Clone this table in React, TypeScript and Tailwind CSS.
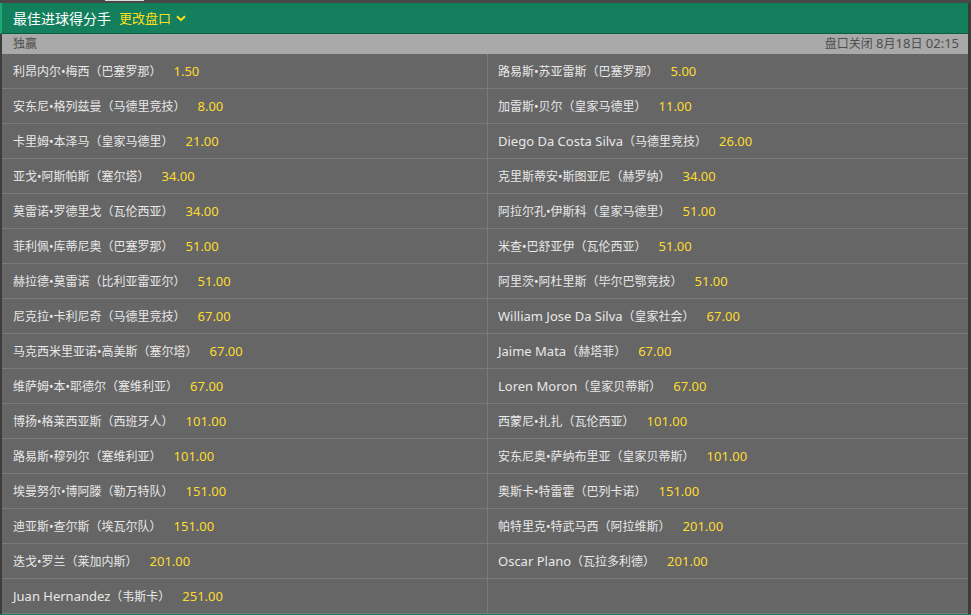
import React from "react";

const left: [string, string][] = [
  ["利昂内尔•梅西（巴塞罗那）", "1.50"],
  ["安东尼•格列兹曼（马德里竞技）", "8.00"],
  ["卡里姆•本泽马（皇家马德里）", "21.00"],
  ["亚戈•阿斯帕斯（塞尔塔）", "34.00"],
  ["莫雷诺•罗德里戈（瓦伦西亚）", "34.00"],
  ["菲利佩•库蒂尼奥（巴塞罗那）", "51.00"],
  ["赫拉德•莫雷诺（比利亚雷亚尔）", "51.00"],
  ["尼克拉•卡利尼奇（马德里竞技）", "67.00"],
  ["马克西米里亚诺•高美斯（塞尔塔）", "67.00"],
  ["维萨姆•本•耶德尔（塞维利亚）", "67.00"],
  ["博扬•格莱西亚斯（西班牙人）", "101.00"],
  ["路易斯•穆列尔（塞维利亚）", "101.00"],
  ["埃曼努尔•博阿滕（勒万特队）", "151.00"],
  ["迪亚斯•查尔斯（埃瓦尔队）", "151.00"],
  ["迭戈•罗兰（莱加内斯）", "201.00"],
  ["Juan Hernandez（韦斯卡）", "251.00"],
];

const right: [string, string][] = [
  ["路易斯•苏亚雷斯（巴塞罗那）", "5.00"],
  ["加雷斯•贝尔（皇家马德里）", "11.00"],
  ["Diego Da Costa Silva（马德里竞技）", "26.00"],
  ["克里斯蒂安•斯图亚尼（赫罗纳）", "34.00"],
  ["阿拉尔孔•伊斯科（皇家马德里）", "51.00"],
  ["米查•巴舒亚伊（瓦伦西亚）", "51.00"],
  ["阿里茨•阿杜里斯（毕尔巴鄂竞技）", "51.00"],
  ["William Jose Da Silva（皇家社会）", "67.00"],
  ["Jaime Mata（赫塔菲）", "67.00"],
  ["Loren Moron（皇家贝蒂斯）", "67.00"],
  ["西蒙尼•扎扎（瓦伦西亚）", "101.00"],
  ["安东尼奥•萨纳布里亚（皇家贝蒂斯）", "101.00"],
  ["奥斯卡•特雷霍（巴列卡诺）", "151.00"],
  ["帕特里克•特武马西（阿拉维斯）", "201.00"],
  ["Oscar Plano（瓦拉多利德）", "201.00"],
  ["", ""],
];

const font = {
  fontFamily: '"Noto Sans", "Noto Sans CJK SC", sans-serif',
};

function Mixed({ text }: { text: string }) {
  const parts = text.split(/([A-Za-z0-9:. ]+)/).filter((p) => p.length > 0);
  return (
    <>
      {parts.map((p, i) =>
        /^[A-Za-z0-9:. ]+$/.test(p) ? (
          <span key={i} className="text-[13px]">
            {p}
          </span>
        ) : (
          <span key={i}>{p}</span>
        )
      )}
    </>
  );
}

function Cell({ name, odds, isLeft }: { name: string; odds: string; isLeft: boolean }) {
  return (
    <div
      className={
        "h-[35px] flex items-center pt-[2px] border-b border-[#7a7a7a] text-[12px] " +
        (isLeft ? "border-r pl-[11px]" : "pl-[10px]")
      }
    >
      {name && (
        <>
          <span className="text-[#e8e8e8]">
            <Mixed text={name} />
          </span>
          <span className="ml-[12px] text-[#ffdc2e] text-[13px]">{odds}</span>
        </>
      )}
    </div>
  );
}

export default function App() {
  const rows = left.map((l, i) => [l, right[i]] as const);
  return (
    <div className="w-[971px] h-[615px] overflow-hidden bg-[#3c3c3c] flex flex-col" style={font}>
      <div className="h-[3px] shrink-0 bg-[#474747] relative">
        <div className="absolute left-[105px] top-0 w-[39px] h-[1px] bg-[#dcdcdc]" />
      </div>
      <div className="flex flex-col mr-[3px]">
        <div className="h-[31px] flex items-center pt-[1px] bg-[#137f5d] border-b border-[#0c5e43] border-l-2 border-l-[#1fa874] pl-[11px]">
          <span className="text-white text-[14px]">最佳进球得分手</span>
          <span className="ml-[8px] text-[#ffdf1b] text-[13px] flex items-center">
            更改盘口
            <svg className="ml-[5px]" width="10" height="7" viewBox="0 0 10 7">
              <path d="M1 1.2 L5 5.2 L9 1.2" stroke="#ffdf1b" strokeWidth="2" fill="none" />
            </svg>
          </span>
        </div>
        <div className="ml-[2px] h-[20px] flex items-center justify-between bg-[#a9a9a9] pl-[11px] pr-[9px] text-[12px] text-[#4e4e4e]">
          <span>独赢</span>
          <span>
            <Mixed text="盘口关闭 8月18日 02:15" />
          </span>
        </div>
        <div className="ml-[2px] grid grid-cols-[486px_1fr] bg-[#666666]">
          {rows.map(([l, r], i) => (
            <React.Fragment key={i}>
              <Cell name={l[0]} odds={l[1]} isLeft />
              <Cell name={r[0]} odds={r[1]} isLeft={false} />
            </React.Fragment>
          ))}
        </div>
      </div>
      <div className="h-[3px] bg-[#137f5d] shrink-0" />
    </div>
  );
}
